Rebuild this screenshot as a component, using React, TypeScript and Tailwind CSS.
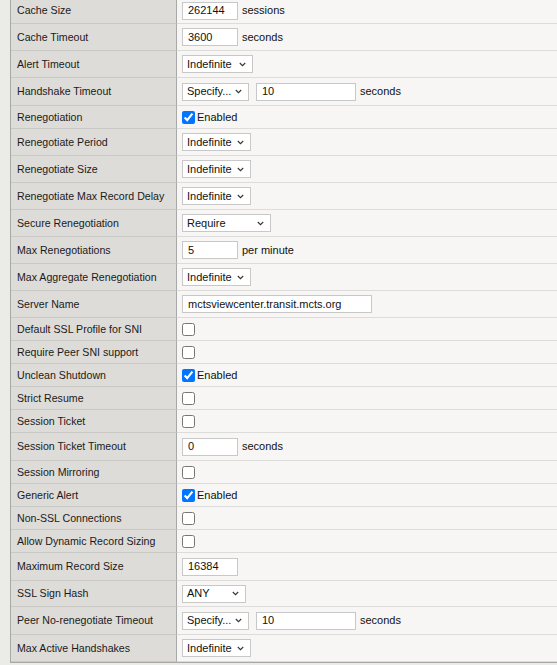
import React from 'react';

type Field =
  | { kind: 'text'; value: string; width: number; suffix?: string }
  | { kind: 'select'; value: string; width: number }
  | { kind: 'specify'; value: string; suffix: string }
  | { kind: 'check'; checked: boolean };

interface Row {
  label: string;
  h: number;
  field: Field;
}

const rows: Row[] = [
  { label: 'Cache Size', h: 26, field: { kind: 'text', value: '262144', width: 56, suffix: 'sessions' } },
  { label: 'Cache Timeout', h: 27, field: { kind: 'text', value: '3600', width: 56, suffix: 'seconds' } },
  { label: 'Alert Timeout', h: 27, field: { kind: 'select', value: 'Indefinite', width: 71 } },
  { label: 'Handshake Timeout', h: 28, field: { kind: 'specify', value: '10', suffix: 'seconds' } },
  { label: 'Renegotiation', h: 23, field: { kind: 'check', checked: true } },
  { label: 'Renegotiate Period', h: 27, field: { kind: 'select', value: 'Indefinite', width: 69 } },
  { label: 'Renegotiate Size', h: 27, field: { kind: 'select', value: 'Indefinite', width: 69 } },
  { label: 'Renegotiate Max Record Delay', h: 27, field: { kind: 'select', value: 'Indefinite', width: 69 } },
  { label: 'Secure Renegotiation', h: 27, field: { kind: 'select', value: 'Require', width: 89 } },
  { label: 'Max Renegotiations', h: 27, field: { kind: 'text', value: '5', width: 56, suffix: 'per minute' } },
  { label: 'Max Aggregate Renegotiation', h: 27, field: { kind: 'select', value: 'Indefinite', width: 69 } },
  { label: 'Server Name', h: 27, field: { kind: 'text', value: 'mctsviewcenter.transit.mcts.org', width: 190 } },
  { label: 'Default SSL Profile for SNI', h: 23, field: { kind: 'check', checked: false } },
  { label: 'Require Peer SNI support', h: 23, field: { kind: 'check', checked: false } },
  { label: 'Unclean Shutdown', h: 23, field: { kind: 'check', checked: true } },
  { label: 'Strict Resume', h: 23, field: { kind: 'check', checked: false } },
  { label: 'Session Ticket', h: 23, field: { kind: 'check', checked: false } },
  { label: 'Session Ticket Timeout', h: 28, field: { kind: 'text', value: '0', width: 56, suffix: 'seconds' } },
  { label: 'Session Mirroring', h: 23, field: { kind: 'check', checked: false } },
  { label: 'Generic Alert', h: 23, field: { kind: 'check', checked: true } },
  { label: 'Non-SSL Connections', h: 23, field: { kind: 'check', checked: false } },
  { label: 'Allow Dynamic Record Sizing', h: 23, field: { kind: 'check', checked: false } },
  { label: 'Maximum Record Size', h: 28, field: { kind: 'text', value: '16384', width: 56 } },
  { label: 'SSL Sign Hash', h: 26, field: { kind: 'select', value: 'ANY', width: 64 } },
  { label: 'Peer No-renegotiate Timeout', h: 28, field: { kind: 'specify', value: '10', suffix: 'seconds' } },
  { label: 'Max Active Handshakes', h: 27, field: { kind: 'select', value: 'Indefinite', width: 69 } },
];

function TextBox({ value, width }: { value: string; width: number }) {
  return (
    <div
      className="h-[18px] bg-white border border-[#c8c8c8] px-[5px] flex items-center text-[11px] text-[#111]"
      style={{ width }}
    >
      {value}
    </div>
  );
}

function SelectBox({ value, width }: { value: string; width: number }) {
  return (
    <div
      className="h-[18px] bg-white border border-[#c8c8c8] pl-[4px] pr-[6px] flex items-center justify-between text-[11px] text-[#111]"
      style={{ width }}
    >
      <span>{value}</span>
      <svg width="7" height="5" viewBox="0 0 7 5" fill="none">
        <path d="M0.8 1l2.7 2.7L6.2 1" stroke="#333" strokeWidth="1.1" />
      </svg>
    </div>
  );
}

function Check({ checked }: { checked: boolean }) {
  return (
    <div className="flex items-center gap-[2px] text-[11px] text-[#111]">
      <input type="checkbox" readOnly checked={checked} className="m-0 w-[13px] h-[13px]" />
      {checked && <span>Enabled</span>}
    </div>
  );
}

function FieldCell({ field }: { field: Field }) {
  switch (field.kind) {
    case 'text':
      return (
        <div className="flex items-center gap-[4px] text-[11px] text-[#111]">
          <TextBox value={field.value} width={field.width} />
          {field.suffix && <span>{field.suffix}</span>}
        </div>
      );
    case 'select':
      return <SelectBox value={field.value} width={field.width} />;
    case 'specify':
      return (
        <div className="flex items-center text-[11px] text-[#111]">
          <SelectBox value="Specify..." width={67} />
          <div className="ml-[7px]">
            <TextBox value={field.value} width={100} />
          </div>
          <span className="ml-[4px]">{field.suffix}</span>
        </div>
      );
    case 'check':
      return <Check checked={field.checked} />;
  }
}

export default function App() {
  return (
    <div
      className="w-[557px] h-[665px] overflow-hidden bg-[#ebebe7] pl-[10px]"
      style={{ fontFamily: '"Liberation Sans", Arial, sans-serif' }}
    >
      <div className="-mt-[2px] border-l border-b border-[#a8a8a8]">
        {rows.map((r) => (
          <div key={r.label} className="flex" style={{ height: r.h }}>
            <div className="w-[166px] shrink-0 bg-[#dedcd8] border-b border-[#c9c9c6] border-r border-r-[#a8a8a8] pl-[6px] pt-[1px] flex items-center text-[10.6px] text-[#1a1a1a]">
              {r.label}
            </div>
            <div className="flex-1 bg-[#f7f6f4] border-b border-[#dcdcda] pl-[5px] flex items-center">
              <FieldCell field={r.field} />
            </div>
          </div>
        ))}
      </div>
    </div>
  );
}
